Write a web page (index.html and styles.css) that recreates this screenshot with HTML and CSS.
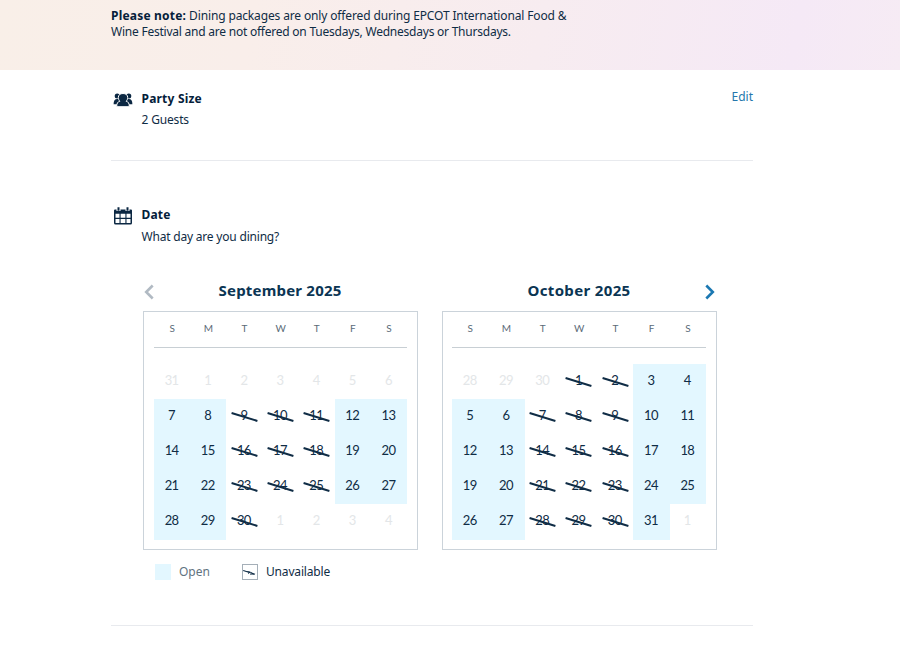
FILE: index.html
```
<!doctype html>
<html lang="en">

<head>
  <meta charset="UTF-8" />
  <meta name="viewport" content="width=device-width, initial-scale=1.0" />
  <title>Dining Packages</title>
  <link rel="stylesheet" href="styles.css">
</head>

<body>
  <div class="banner">
    <p class="note"><strong>Please note:</strong> <span class="note-start">Dining packages are only offered during EPCOT International Food &amp;</span><br><span class="note-end">Wine Festival and are not offered on Tuesdays, Wednesdays or Thursdays.</span></p>
  </div>

  <main class="container">
    <section class="party">
      <svg class="icon icon-party" viewBox="0 0 20 14">
        <circle cx="4.2" cy="3" r="2.5" />
        <circle cx="15.8" cy="3" r="2.5" />
        <path d="M.6 11.2C.6 7.8 1.8 6 4.2 6h11.6c2.4 0 3.6 1.8 3.6 5.2z" />
        <path class="outline" d="M3.7 13.7c0-3.4 1-5 3.2-5.5-1.1-1-1.6-2.2-1.6-3.6C5.3 2 7.1.5 10 .5s4.7 1.5 4.7 4.1c0 1.4-.5 2.6-1.6 3.6 2.2.5 3.2 2.1 3.2 5.5z" />
      </svg>
      <div class="info">
        <h2>Party Size</h2>
        <p class="guests">2 Guests</p>
      </div>
      <a class="edit">Edit</a>
    </section>

    <section class="date">
      <svg class="icon icon-date" viewBox="0 0 18 18">
        <path d="M1 2.5h16a1 1 0 0 1 1 1V16a1.500 1.500 0 0 1-1.500 1.500h-15A1.500 1.500 0 0 1 0 16V3.500a1 1 0 0 1 1-1z" />
        <path class="cells" d="M1.500 6.800h4v4h-4zM6.600 6.800h4.800v4H6.600zM12.500 6.800h4v4h-4zM1.500 11.900h4V16h-4zM6.600 11.900h4.800V16H6.600zM12.500 11.900h4V16h-4z" />
        <path class="ring-gap" d="M4.500 0v4M13.500 0v4" />
        <path class="ring" d="M4.500.2v3.600M13.500.2v3.600" />
      </svg>
      <div class="info">
        <h2>Date</h2>
        <p class="question">What day are you dining?</p>
      </div>
    </section>

    <div class="calendars">
      <div class="month september">
        <div class="month-head">
          <svg class="arrow prev" viewBox="0 0 10 16"><path d="M8.700 1.500 2.200 8l6.500 6.500" /></svg>
          <h3>September 2025</h3>
        </div>
        <div class="calendar">
          <div class="weekdays"><span>S</span><span>M</span><span>T</span><span>W</span><span>T</span><span>F</span><span>S</span></div>
          <div class="days">
            <span class="other">31</span><span class="other">1</span><span class="other">2</span><span class="other">3</span><span class="other">4</span><span class="other">5</span><span class="other">6</span>
            <span class="open">7</span><span class="open">8</span><span class="off">9</span><span class="off">10</span><span class="off">11</span><span class="open">12</span><span class="open">13</span>
            <span class="open">14</span><span class="open">15</span><span class="off">16</span><span class="off">17</span><span class="off">18</span><span class="open">19</span><span class="open">20</span>
            <span class="open">21</span><span class="open">22</span><span class="off">23</span><span class="off">24</span><span class="off">25</span><span class="open">26</span><span class="open">27</span>
            <span class="open">28</span><span class="open">29</span><span class="off">30</span><span class="other">1</span><span class="other">2</span><span class="other">3</span><span class="other">4</span>
          </div>
        </div>
      </div>

      <div class="month october">
        <div class="month-head">
          <h3>October 2025</h3>
          <svg class="arrow next" viewBox="0 0 10 16"><path d="M1.300 1.500 7.800 8l-6.500 6.500" /></svg>
        </div>
        <div class="calendar">
          <div class="weekdays"><span>S</span><span>M</span><span>T</span><span>W</span><span>T</span><span>F</span><span>S</span></div>
          <div class="days">
            <span class="other">28</span><span class="other">29</span><span class="other">30</span><span class="off">1</span><span class="off">2</span><span class="open">3</span><span class="open">4</span>
            <span class="open">5</span><span class="open">6</span><span class="off">7</span><span class="off">8</span><span class="off">9</span><span class="open">10</span><span class="open">11</span>
            <span class="open">12</span><span class="open">13</span><span class="off">14</span><span class="off">15</span><span class="off">16</span><span class="open">17</span><span class="open">18</span>
            <span class="open">19</span><span class="open">20</span><span class="off">21</span><span class="off">22</span><span class="off">23</span><span class="open">24</span><span class="open">25</span>
            <span class="open">26</span><span class="open">27</span><span class="off">28</span><span class="off">29</span><span class="off">30</span><span class="open">31</span><span class="other">1</span>
          </div>
        </div>
      </div>
    </div>

    <div class="legend">
      <span class="swatch"></span>
      <span class="legend-open">Open</span>
      <svg class="legend-icon" viewBox="0 0 16 16">
        <rect x=".5" y=".5" width="15" height="15" />
        <path class="number" d="M5 7.500h2.500l-1.200 2.500M8 10.300h4M8.500 8l3 2" />
        <path d="M1.200 6.500 13 10.300" />
      </svg>
      <span class="legend-off">Unavailable</span>
    </div>
  </main>
</body>

</html>
```
FILE: styles.css
```
* {
  box-sizing: border-box;
}

body {
  margin: 0;
  height: 655px;
  overflow: hidden;
  background: #fff;
  color: #0f2c45;
  font-family: "Noto Sans", "Open Sans", sans-serif;
  font-size: 12px;
  line-height: 16px;
  letter-spacing: -0.17px;
}

h2,
h3,
p {
  margin: 0;
}

.banner {
  height: 70px;
  padding: 8px 0 0 111px;
  background: linear-gradient(100deg, #f9efe8 0%, #f9eeea 28%, #f7ecf0 60%, #f5e9f6 88%, #f6ebf4 100%);
}

.note {
  white-space: nowrap;
}

.note-start {
  letter-spacing: -0.14px;
}

.note-end {
  letter-spacing: -0.23px;
}

strong,
h2,
h3 {
  color: #04203a;
  font-weight: 700;
  letter-spacing: 0.2px;
}

.container {
  width: 642px;
  margin-left: 111px;
  border-bottom: 1px solid #e8eaee;
}

.party {
  display: flex;
  height: 91px;
  padding-top: 21px;
  border-bottom: 1px solid #e8eaee;
}

.icon {
  flex: none;
  fill: #0b2742;
}

.icon-party {
  width: 20px;
  height: 14px;
  margin: 2px 8.5px 0 2px;
}

.icon-party .outline {
  stroke: #fff;
  stroke-width: 1px;
}

.info {
  flex: 1;
}

h2 {
  font-size: 12px;
  line-height: 16px;
}

.guests {
  margin-top: 5px;
}

.edit {
  margin-top: -2px;
  color: #2577ac;
  letter-spacing: 0;
}

.date {
  display: flex;
  padding-top: 46px;
}

.icon-date {
  width: 18px;
  height: 18px;
  margin: 0 9.5px 0 3px;
}

.icon-date .cells {
  fill: #fff;
}

.ring-gap {
  stroke: #fff;
  stroke-width: 4px;
}

.ring {
  stroke: #0b2742;
  stroke-width: 2px;
}

.question {
  margin-top: 6px;
  letter-spacing: -0.2px;
}

.calendars {
  display: flex;
  gap: 24px;
  margin: 35px 0 0 32px;
}

.month {
  width: 275px;
}

.month-head {
  display: grid;
  grid-template-columns: 10px 1fr 10px;
  height: 31px;
  padding: 0 2px 0 1px;
}

.month-head h3 {
  grid-column: 2;
  color: #0b3553;
  font-size: 15px;
  line-height: 20px;
  text-align: center;
}

.october h3 {
  letter-spacing: 0.35px;
}

.arrow {
  width: 10px;
  height: 16px;
  margin-top: 4px;
  fill: none;
  stroke-width: 2.6px;
}

.prev {
  stroke: #b1bac3;
}

.next {
  stroke: #1b78b2;
}

.calendar {
  height: 239px;
  padding: 0 10px;
  border: 1px solid #cbd3da;
  font-family: Lato, sans-serif;
}

.october .calendar {
  padding-left: 9px;
}

.weekdays,
.days {
  display: grid;
  grid-template-columns: repeat(7, 1fr);
  text-align: center;
}

.weekdays {
  height: 36px;
  padding-top: 8px;
  border-bottom: 1px solid #c8cfd4;
  color: #5b6b78;
  font-size: 10px;
}

.days {
  grid-template-rows: repeat(4, 35px) 36px;
  margin-top: 16px;
  font-size: 13px;
  line-height: 33px;
  letter-spacing: -0.6px;
}

.days span {
  padding-right: 1px;
}

.days .open {
  background: #e3f7ff;
}

.days .other {
  color: #e3e6e8;
}

.days .off {
  position: relative;
}

.days .off::after {
  content: "";
  position: absolute;
  top: 16.5px;
  left: 4.5px;
  width: 27px;
  height: 2px;
  background: #0f2c45;
  transform: rotate(17deg);
}

.legend {
  display: flex;
  align-items: center;
  margin: 14px 0 0 44px;
  padding-bottom: 45px;
}

.swatch {
  width: 16px;
  height: 16px;
  margin-right: 8px;
  background: #e3f7ff;
}

.legend-open {
  width: 63px;
  color: #62737f;
  letter-spacing: 0;
}

.legend-icon {
  width: 16px;
  height: 16px;
  margin-right: 8px;
  fill: none;
  stroke: #0f2c45;
  stroke-width: 1.2px;
}

.legend-icon rect {
  stroke: #a5afb8;
  stroke-width: 1px;
}

.legend-icon .number {
  stroke-width: .7px;
}
```
